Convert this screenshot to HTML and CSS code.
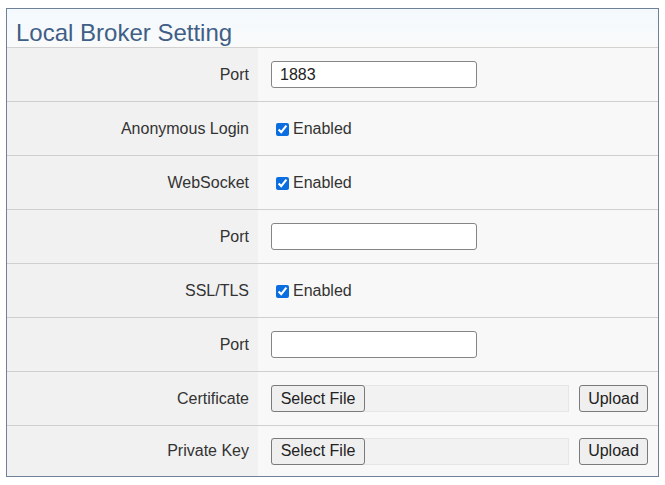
FILE: index.html
```html
<!DOCTYPE html>
<html>
<head>
<meta charset="utf-8">
<link rel="stylesheet" href="styles.css">
</head>
<body>
<div class="panel">
  <div class="panel-head">Local Broker Setting</div>
  <div class="row">
    <div class="label">Port</div>
    <div class="value"><input class="text" type="text" value="1883"></div>
  </div>
  <div class="row">
    <div class="label">Anonymous Login</div>
    <div class="value"><label class="check"><input type="checkbox" checked>Enabled</label></div>
  </div>
  <div class="row">
    <div class="label">WebSocket</div>
    <div class="value"><label class="check"><input type="checkbox" checked>Enabled</label></div>
  </div>
  <div class="row">
    <div class="label">Port</div>
    <div class="value"><input class="text" type="text" value=""></div>
  </div>
  <div class="row">
    <div class="label">SSL/TLS</div>
    <div class="value"><label class="check"><input type="checkbox" checked>Enabled</label></div>
  </div>
  <div class="row">
    <div class="label">Port</div>
    <div class="value"><input class="text" type="text" value=""></div>
  </div>
  <div class="row">
    <div class="label">Certificate</div>
    <div class="value">
      <div class="file"><button class="btn select">Select File</button><span class="fname"></span></div>
      <button class="btn upload">Upload</button>
    </div>
  </div>
  <div class="row last">
    <div class="label">Private Key</div>
    <div class="value">
      <div class="file"><button class="btn select">Select File</button><span class="fname"></span></div>
      <button class="btn upload">Upload</button>
    </div>
  </div>
</div>
</body>
</html>
```
FILE: styles.css
```css
html, body {
  margin: 0;
  padding: 0;
  background: #ffffff;
}
body {
  font-family: "Liberation Sans", Arial, sans-serif;
  color: #333333;
}
.panel {
  margin: 8px 0 0 6px;
  width: 651px;
  border: 1px solid #6e8199;
  background: #f8f8f8;
}
.panel-head {
  height: 39px;
  box-sizing: border-box;
  padding: 9px 0 0 9px;
  font-size: 24px;
  line-height: 30px;
  color: #3f5f86;
  background: linear-gradient(#f3f9fe, #fafafa);
  border-bottom: 1px solid #d2d2d2;
}
.row {
  display: flex;
  height: 54px;
  box-sizing: border-box;
  border-bottom: 1px solid #cfcfcf;
}
.row.last {
  height: 50px;
  border-bottom: none;
}
.label {
  width: 251px;
  flex: none;
  box-sizing: border-box;
  padding-right: 9px;
  background: #f1f1f1;
  display: flex;
  align-items: center;
  justify-content: flex-end;
  font-size: 16px;
}
.value {
  flex: 1;
  display: flex;
  align-items: center;
  padding-left: 13px;
  background: #f8f8f8;
  font-size: 16px;
}
.text {
  width: 206px;
  height: 27px;
  box-sizing: border-box;
  border: 1px solid #858585;
  border-radius: 3px;
  padding: 0 8px;
  font-family: "Liberation Sans", Arial, sans-serif;
  font-size: 16px;
  color: #222;
  background: #fff;
}
.check {
  display: flex;
  align-items: center;
  font-size: 16px;
  color: #333;
}
.check input {
  width: 13px;
  height: 13px;
  margin: 1px 4px 0 5px;
  accent-color: #0b6ee0;
}
.file {
  display: flex;
  width: 298px;
  height: 27px;
  border: 1px solid #e6e6e6;
  border-left: none;
  box-sizing: border-box;
  background: #f2f2f2;
}
.btn {
  height: 27px;
  box-sizing: border-box;
  border: 1px solid #7a7a7a;
  border-radius: 3px;
  background: #efefef;
  font-family: "Liberation Sans", Arial, sans-serif;
  font-size: 16px;
  color: #222;
  padding: 0;
}
.select {
  width: 94px;
  margin-top: -1px;
}
.upload {
  width: 69px;
  margin-left: 10px;
}
```
